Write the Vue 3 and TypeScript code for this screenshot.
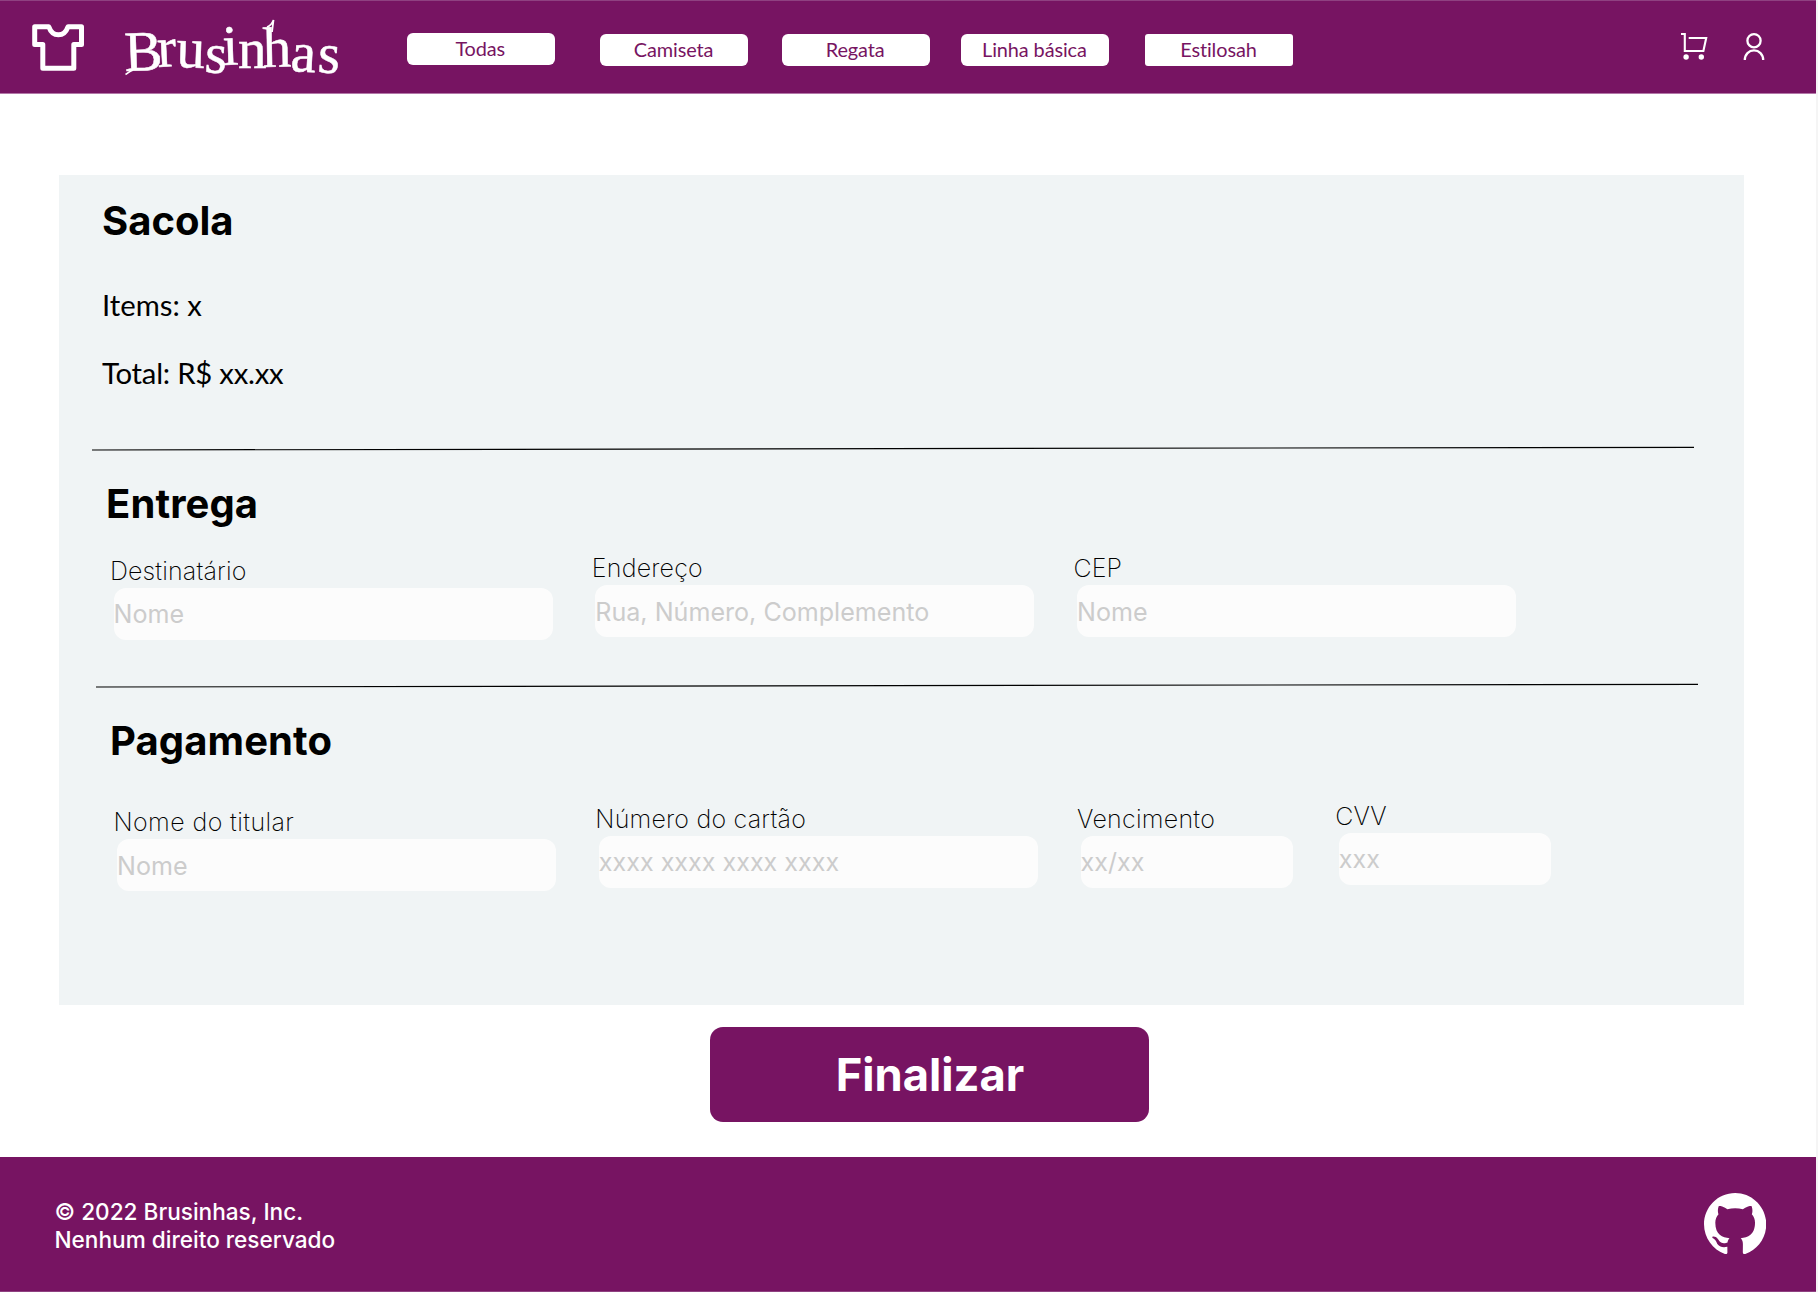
<script setup lang="ts">
interface Field {
  id: string
  label: string
  placeholder: string
}

const categories: { id: string; label: string }[] = [
  { id: 'todas', label: 'Todas' },
  { id: 'camiseta', label: 'Camiseta' },
  { id: 'regata', label: 'Regata' },
  { id: 'basica', label: 'Linha básica' },
  { id: 'estilosah', label: 'Estilosah' },
]

const deliveryFields: Field[] = [
  { id: 'destinatario', label: 'Destinatário', placeholder: 'Nome' },
  { id: 'endereco', label: 'Endereço', placeholder: 'Rua, Número, Complemento' },
  { id: 'cep', label: 'CEP', placeholder: 'Nome' },
]

const paymentFields: Field[] = [
  { id: 'titular', label: 'Nome do titular', placeholder: 'Nome' },
  { id: 'cartao', label: 'Número do cartão', placeholder: 'xxxx xxxx xxxx xxxx' },
  { id: 'vencimento', label: 'Vencimento', placeholder: 'xx/xx' },
  { id: 'cvv', label: 'CVV', placeholder: 'xxx' },
]
</script>

<template>
  <div class="page">
    <header class="header">
      <svg class="shirt" width="54" height="50" viewBox="30 22 54 50" aria-hidden="true">
        <path
          d="M33.7 26.7H47.8C49.6 31.9 53.4 34.8 57.4 34.8S65.2 31.9 67 26.7H80.5V44.6H72.8V68.3H41.8V44.6H33.7Z"
          fill="none" stroke="#fff" stroke-width="5" stroke-linejoin="round"
        />
      </svg>
      <!-- Each letter has its own offset and tilt for the hand-drawn wordmark -->
      <svg class="brand" width="230" height="82" viewBox="120 5 230 82" role="img" aria-label="Brusinhas">
        <text
          x="125 158 176 204 223 238 263 290 317"
          y="71 67 67 72 65 68 67 71 72"
          rotate="-2 -3 2 4 -2 0 -1 3 4"
        >Brusinhas</text>
        <path d="M125.5 74.5C128 73 130 71 133 70M267 27C270 26 272 24 273.5 20L272 32" />
      </svg>
      <nav class="nav">
        <button v-for="c in categories" :key="c.id" type="button" class="pill" :class="c.id">{{ c.label }}</button>
      </nav>
      <svg class="cart" width="28" height="30" viewBox="1680 32 28 30" aria-hidden="true">
        <path d="M1681 34H1684.8V51H1703.4L1706.2 38H1688.7" fill="none" stroke="#fff" stroke-width="2.1" />
        <circle cx="1686.1" cy="57" r="2.7" fill="#fff" />
        <circle cx="1701.3" cy="57" r="2.7" fill="#fff" />
      </svg>
      <svg class="user" width="24" height="30" viewBox="1742.3 32 24 30" aria-hidden="true">
        <g fill="none" stroke="#fff" stroke-width="2.3">
          <circle cx="1754.3" cy="40.7" r="6.6" />
          <path d="M1745.1 60C1745.1 54.4 1749.2 50.4 1754.3 50.4S1763.5 54.4 1763.5 60" />
        </g>
      </svg>
    </header>

    <main class="panel">
      <section class="section bag">
        <h2>Sacola</h2>
        <p class="items">Items: x</p>
        <p class="total">Total: R$ xx.xx</p>
      </section>

      <svg class="rule rule-one" width="1602" height="6" viewBox="0 0 1602 6" aria-hidden="true">
        <path d="M0 4L1602 1.3" />
      </svg>

      <section class="section delivery">
        <h2>Entrega</h2>
        <div class="fields">
          <label v-for="f in deliveryFields" :key="f.id" class="field" :class="f.id">
            <span>{{ f.label }}</span>
            <input type="text" :placeholder="f.placeholder" />
          </label>
        </div>
      </section>

      <svg class="rule rule-two" width="1602" height="6" viewBox="0 0 1602 6" aria-hidden="true">
        <path d="M0 4L1602 1.3" />
      </svg>

      <section class="section payment">
        <h2>Pagamento</h2>
        <div class="fields">
          <label v-for="f in paymentFields" :key="f.id" class="field" :class="f.id">
            <span>{{ f.label }}</span>
            <input type="text" :placeholder="f.placeholder" />
          </label>
        </div>
      </section>
    </main>

    <button type="button" class="submit">Finalizar</button>

    <footer class="footer">
      <p>© 2022 Brusinhas, Inc.<br />Nenhum direito reservado</p>
      <svg width="62.5" height="61.2" viewBox="0 0 98 96" aria-hidden="true">
        <path
          fill="#fff" fill-rule="evenodd" clip-rule="evenodd"
          d="M48.854 0C21.839 0 0 22 0 49.217c0 21.756 13.993 40.172 33.405 46.69 2.427.49 3.316-1.059 3.316-2.362 0-1.141-.08-5.052-.08-9.127-13.59 2.934-16.42-5.867-16.42-5.867-2.184-5.704-5.42-7.17-5.42-7.17-4.448-3.015.324-3.015.324-3.015 4.934.326 7.523 5.052 7.523 5.052 4.367 7.496 11.404 5.378 14.235 4.074.404-3.178 1.699-5.378 3.074-6.6-10.839-1.141-22.243-5.378-22.243-24.283 0-5.378 1.94-9.778 5.014-13.2-.485-1.222-2.184-6.275.486-13.038 0 0 4.125-1.304 13.426 5.052a46.97 46.97 0 0 1 12.214-1.63c4.125 0 8.33.571 12.213 1.63 9.302-6.356 13.427-5.052 13.427-5.052 2.67 6.763.97 11.816.485 13.038 3.155 3.422 5.015 7.822 5.015 13.2 0 18.905-11.404 23.06-22.324 24.283 1.78 1.548 3.316 4.481 3.316 9.126 0 6.6-.08 11.897-.08 13.526 0 1.304.89 2.853 3.316 2.364 19.412-6.52 33.405-24.935 33.405-46.691C97.707 22 75.788 0 48.854 0z"
        />
      </svg>
    </footer>
  </div>
</template>

<style>
body {
  background: #f5f5f5;
}
</style>

<style scoped>
.page {
  display: flex;
  flex-direction: column;
  align-items: flex-start;
  box-sizing: border-box;
  width: 1816px;
  height: 1292px;
  background: #fff;
  font-family: Inter, "Liberation Sans", sans-serif;
}

p,
h2 {
  margin: 0;
}

svg {
  display: block;
  flex: none;
}

.header {
  display: flex;
  align-items: flex-start;
  box-sizing: border-box;
  width: 1816px;
  height: 94px;
  flex: none;
  background: #771462;
  border-top: 1px solid #8f4181;
  border-bottom: 1px solid #b377a8;
}

.shirt {
  margin: 21px 0 0 30.5px;
}

.brand {
  margin: 4px 0 0 35.5px;
}

.brand text {
  fill: #fff;
  stroke: #fff;
  stroke-width: 0.5;
  font-family: "Liberation Serif", serif;
  font-size: 57px;
}

.brand path {
  fill: none;
  stroke: #fff;
  stroke-width: 1.8;
}

.nav {
  display: flex;
  margin: 33px 0 0 57px;
}

.pill {
  width: 148px;
  height: 31.5px;
  padding: 0 1.5px 0 0;
  border: 0;
  border-radius: 6px;
  background: #fff;
  color: #771462;
  font: 19.9px/31.5px Lato, sans-serif;
  font-variant-ligatures: none;
  letter-spacing: -0.1px;
}

.todas {
  margin-top: -1px;
  line-height: 31px;
}

.camiseta {
  margin-left: 45.3px;
}

.regata {
  margin-left: 33.6px;
}

.basica {
  margin-left: 31.3px;
}

.estilosah {
  margin-left: 36px;
  border-radius: 3px;
}

.cart {
  margin: 31px 0 0 387px;
}

.user {
  margin: 31px 0 0 34.3px;
}

.panel {
  display: flex;
  flex-direction: column;
  align-items: flex-start;
  box-sizing: border-box;
  width: 1685px;
  height: 830.5px;
  margin: 80.5px 0 0 59px;
  flex: none;
  background: #f0f4f5;
  color: #000;
}

h2 {
  font-size: 40px;
  font-weight: 700;
  line-height: 49px;
  height: 48px;
}

.bag {
  padding: 22px 0 0 43px;
}

.bag h2 {
  line-height: 48px;
}

.items,
.total {
  font-family: Lato, sans-serif;
  line-height: 38px;
  height: 36px;
}

.items {
  margin-top: 41.5px;
  font-size: 29.3px;
}

.total {
  margin-top: 32.4px;
  font-size: 29.3px;
  letter-spacing: -0.24px;
}

.rule path {
  fill: none;
  stroke: #000;
  stroke-width: 1.2;
}

.rule-one {
  margin: 55.6px 0 0 33px;
}

.delivery {
  padding: 27px 0 0 47px;
}

.delivery h2,
.payment h2 {
  letter-spacing: 0.1px;
}

.rule-two {
  margin: 42.9px 0 0 37px;
}

.payment {
  padding: 26.7px 0 0 51px;
}

.fields {
  display: flex;
  align-items: flex-start;
}

.delivery .fields {
  margin: 25.5px 0 0 3.5px;
}

.payment .fields {
  margin: 36.2px 0 0 3px;
}

.field {
  display: flex;
  flex-direction: column;
  width: 443px;
}

.field span {
  height: 33px;
  padding-left: 0.5px;
  color: #000;
  font-size: 25px;
  font-weight: 220;
  line-height: 33px;
  white-space: nowrap;
}

.field input {
  box-sizing: border-box;
  height: 52px;
  margin: 0 0 0 4px;
  padding: 0.5px 0 0;
  border: 0;
  border-radius: 12px;
  outline: 0;
  background: #fcfcfc;
  font: 25.1px Inter, sans-serif;
}

.field input::placeholder {
  color: #ccc;
  opacity: 1;
}

.destinatario {
  margin-top: 2.6px;
}

.destinatario span {
  letter-spacing: 0.15px;
}

.endereco span {
  letter-spacing: 0.22px;
}

.titular span {
  letter-spacing: 0.4px;
}

.cartao span {
  letter-spacing: 0.2px;
}

.vencimento span {
  letter-spacing: 0.25px;
}

.endereco,
.cep,
.cartao,
.vencimento {
  margin-left: 38.8px;
}

.titular {
  margin-top: 6.6px;
}

.cartao,
.vencimento {
  margin-top: 3.4px;
}

.vencimento,
.cvv {
  width: 216px;
}

.cvv {
  margin-left: 42.2px;
}

.submit {
  width: 439px;
  height: 95px;
  margin: 21.5px 0 0 710px;
  padding: 0 0 0 1px;
  flex: none;
  border: 0;
  border-radius: 13px;
  background: #771462;
  color: #fff;
  font: 700 45.3px Inter, sans-serif;
}

.footer {
  display: flex;
  justify-content: space-between;
  align-items: flex-start;
  box-sizing: border-box;
  width: 1816px;
  height: 135.5px;
  margin-top: 35px;
  padding: 36.5px 50px 0 54.5px;
  flex: none;
  border-bottom: 1px solid #8f4181;
  background: #771462;
  color: #fff;
}

.footer p {
  margin-top: 4.5px;
  font-size: 22.6px;
  font-weight: 500;
  line-height: 28px;
}
</style>
